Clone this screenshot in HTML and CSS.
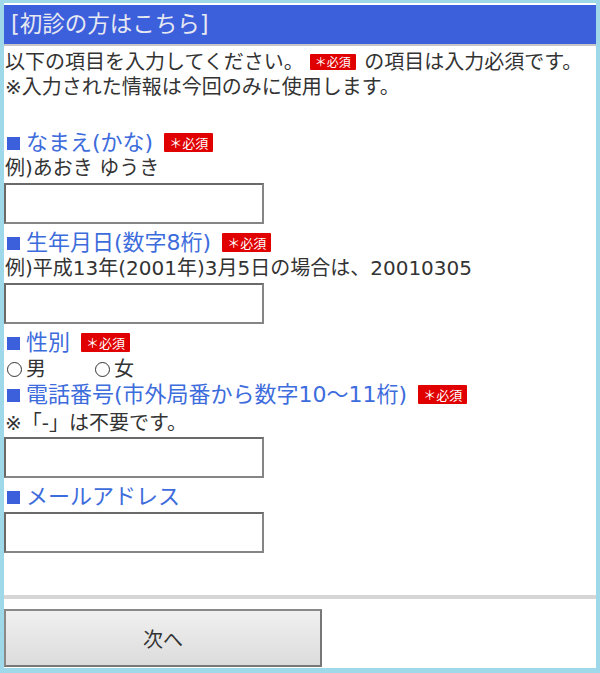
FILE: index.html
```html
<!DOCTYPE html>
<html lang="ja">
<head>
    <meta charset="UTF-8">
    <meta name="viewport" content="width=device-width, initial-scale=1.0">
    <title>初診の方はこちら</title>
    <link rel="stylesheet" href="styles.css">
</head>
<body>
    <div class="frame">
        <!-- Page title bar -->
        <div class="title-bar">[初診の方はこちら]</div>

        <p class="intro">
            以下の項目を入力してください。<span class="badge">＊必須</span> の項目は入力必須です。<br>
            ※入力された情報は今回のみに使用します。
        </p>

        <form class="entry-form">
            <div class="field first">
                <div class="field-title">なまえ(かな) <span class="badge big">＊必須</span></div>
                <div class="hint">例)あおき ゆうき</div>
                <input type="text" class="text-box">
            </div>

            <div class="field">
                <div class="field-title">生年月日(数字8桁) <span class="badge big">＊必須</span></div>
                <div class="hint">例)平成13年(2001年)3月5日の場合は、20010305</div>
                <input type="text" class="text-box">
            </div>

            <div class="field">
                <div class="field-title">性別 <span class="badge big">＊必須</span></div>
                <div class="radio-row">
                    <label class="radio"><span class="radio-mark"></span>男</label>
                    <label class="radio"><span class="radio-mark"></span>女</label>
                </div>
            </div>

            <div class="field tight">
                <div class="field-title">電話番号(市外局番から数字10～11桁) <span class="badge big">＊必須</span></div>
                <div class="hint note">※「-」は不要です。</div>
                <input type="text" class="text-box">
            </div>

            <div class="field">
                <div class="field-title">メールアドレス</div>
                <input type="text" class="text-box">
            </div>

            <div class="divider"></div>

            <button type="button" class="next-button">次へ</button>
        </form>
    </div>
</body>
</html>
```

FILE: styles.css
```css
* {
    margin: 0;
    padding: 0;
    box-sizing: border-box;
    font-family: 'DejaVu Sans', 'Noto Sans CJK JP', sans-serif;
}

body {
    background-color: #9fd8e9;
    padding: 3px 4px 5px 4px;
    height: 673px;
    overflow: hidden;
}

.frame {
    background-color: #fff;
    height: 665px;
    padding-top: 2px;
    color: #333;
}

/* Title bar */
.title-bar {
    background-color: #3c5fdc;
    color: #e6e8f2;
    height: 39px;
    line-height: 38px;
    font-size: 22.5px;
    padding-left: 7px;
    border-bottom: 2px solid #c6c6c6;
    box-sizing: content-box;
}

.intro {
    padding: 4px 0 0 1px;
    font-size: 20px;
    line-height: 25px;
}

/* Required badge */
.badge {
    display: inline-block;
    background-color: #e00000;
    color: #fff;
    font-family: 'Noto Sans CJK JP', sans-serif;
    font-size: 12px;
    line-height: 16px;
    height: 16px;
    padding: 0 5px;
    border-radius: 1px;
    vertical-align: 2px;
    margin-left: 6px;
    margin-right: 2px;
}

.badge.big {
    font-size: 13px;
    line-height: 19px;
    height: 19px;
    padding: 0 5px;
    vertical-align: 2px;
    margin-left: 4px;
    margin-right: 0;
}

/* Form fields */
.field {
    margin-top: 6px;
}

.field.first {
    margin-top: 30px;
}

.field.tight {
    margin-top: 0;
}

.field-title {
    font-size: 22px;
    line-height: 26px;
    color: #3d6cdc;
    padding-left: 3px;
}

.field-title::before {
    content: "";
    display: inline-block;
    width: 13px;
    height: 13px;
    background-color: #3c5fdc;
    margin-right: 6px;
    vertical-align: 0;
}

.hint {
    font-size: 20px;
    line-height: 25px;
    padding-left: 1px;
}

.hint.note {
    margin-top: 3px;
}

.text-box {
    display: block;
    width: 260px;
    height: 41px;
    margin-top: 2px;
    border: 2px solid #6a6a6a;
    border-right-color: #858585;
    border-bottom-color: #858585;
    background: #fff;
    outline: none;
}

.hint.note + .text-box {
    margin-top: 1px;
}

.radio-row {
    display: flex;
    font-size: 20px;
    line-height: 25px;
    padding-left: 3px;
    margin-top: 1px;
}

.radio {
    display: flex;
    align-items: center;
    width: 88px;
}

.radio-mark {
    display: inline-block;
    width: 15px;
    height: 15px;
    border: 1.5px solid #333;
    border-radius: 50%;
    margin-right: 4px;
}

.divider {
    margin-top: 42px;
    height: 4px;
    background-color: #d6d6d6;
}

.next-button {
    display: block;
    margin-top: 10px;
    width: 318px;
    height: 58px;
    border: 2px solid #777;
    border-top-color: #8a8a8a;
    border-left-color: #8a8a8a;
    background: linear-gradient(#f0f0f0, #dcdcdc);
    color: #333;
    font-size: 20px;
    cursor: pointer;
}
```
